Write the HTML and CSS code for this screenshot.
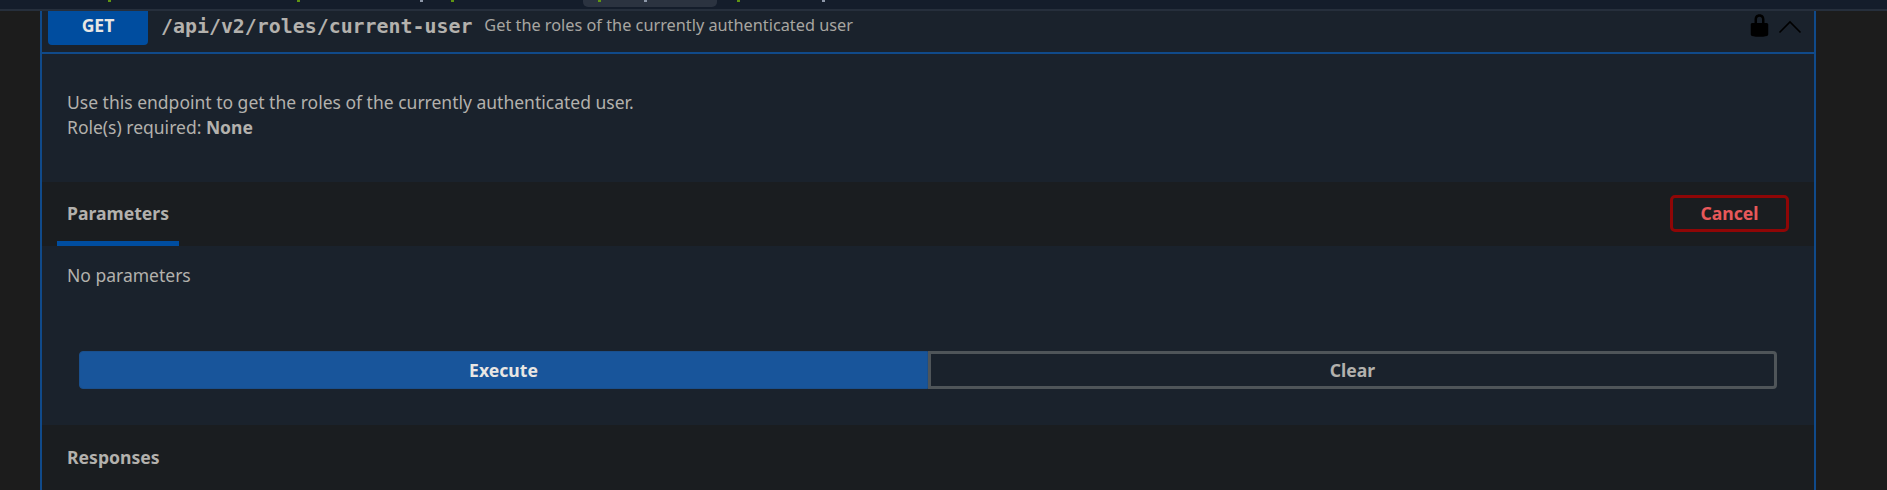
FILE: index.html
```html
<!DOCTYPE html>
<html lang="en">
<head>
    <meta charset="UTF-8">
    <title>Swagger UI</title>
    <link rel="stylesheet" href="styles.css">
</head>
<body>
    <div class="topbar">
        <span class="mark mark-1"></span>
        <span class="mark mark-2"></span>
        <span class="mark mark-3 mark-pale"></span>
        <span class="mark mark-4"></span>
        <span class="code-pill">
            <span class="mark mark-5"></span>
            <span class="mark mark-6 mark-pale"></span>
        </span>
        <span class="mark mark-7"></span>
        <span class="mark mark-8 mark-pale"></span>
    </div>
    <div class="opblock">
        <div class="summary">
            <span class="method">GET</span>
            <span class="path">/api/v2/roles/current-user</span>
            <span class="summary-text">Get the roles of the currently authenticated user</span>
            <svg class="lock" viewBox="0 0 20 20" width="25" height="25">
                <path d="M15.8 8H14V5.6C14 2.703 12.665 1 10 1 7.334 1 6 2.703 6 5.6V8H4c-.553 0-1 .646-1 1.199V17c0 .549.428 1.139.951 1.307l1.197.387C5.672 18.861 6.55 19 7.1 19h5.8c.549 0 1.428-.139 1.951-.307l1.196-.387c.524-.167.953-.757.953-1.306V9.199C17 8.646 16.352 8 15.8 8zM12 8H8V5.199C8 3.754 8.797 3 10 3c1.203 0 2 .754 2 2.199V8z"/>
            </svg>
            <svg class="arrow" viewBox="0 0 24 14" width="24" height="14">
                <polyline points="1.5,12.5 12,2 22.5,12.5"/>
            </svg>
        </div>
        <div class="description">
            <p>Use this endpoint to get the roles of the currently authenticated user.</p>
            <p>Role(s) required: <b>None</b></p>
        </div>
        <div class="section-header">
            <div class="tab">Parameters</div>
            <button class="cancel">Cancel</button>
        </div>
        <div class="no-params">No parameters</div>
        <div class="actions">
            <button class="execute">Execute</button>
            <button class="clear">Clear</button>
        </div>
        <div class="responses-header">Responses</div>
    </div>
</body>
</html>
```

FILE: styles.css
```css
html, body {
    height: 100%;
}
body {
    margin: 0;
    overflow: hidden;
    background: #1c1c1c;
    font-family: "Noto Sans", "Open Sans", sans-serif;
    color: #b3b1ad;
    display: flex;
    flex-direction: column;
}
p {
    margin: 0;
}
button {
    font-family: inherit;
    font-weight: 700;
    font-size: 17.6px;
    cursor: pointer;
}
.topbar {
    flex: none;
    display: flex;
    align-items: flex-start;
    height: 9px;
    background: #141d2b;
    border-bottom: 2px solid #262f3c;
}
.mark {
    width: 3px;
    height: 2px;
    background: #5f9412;
}
.mark-pale {
    background: #8d97a8;
}
.mark-1 {
    margin-left: 108px;
}
.mark-2 {
    margin-left: 186px;
}
.mark-3 {
    margin-left: 120px;
}
.mark-4 {
    margin-left: 28px;
}
.mark-5 {
    margin-left: 15px;
}
.mark-6 {
    margin-left: 43px;
}
.mark-7 {
    margin-left: 20px;
}
.mark-8 {
    margin-left: 82px;
}
.code-pill {
    display: flex;
    align-items: flex-start;
    width: 134px;
    height: 7px;
    margin-left: 129px;
    background: #2b3340;
    border-radius: 0 0 5px 5px;
}
.opblock {
    flex: 1;
    display: flex;
    flex-direction: column;
    margin: 0 71px 0 40px;
    background: #1a222c;
    border-left: 2px solid #104a8a;
    border-right: 2px solid #104a8a;
}
.summary {
    display: flex;
    align-items: flex-start;
    height: 41px;
    border-bottom: 2px solid #104a8a;
    flex: none;
}
.method {
    width: 100px;
    height: 34px;
    margin-left: 6px;
    background: #004d9f;
    border-radius: 0 0 4px 4px;
    color: #e8e6e3;
    font-weight: 700;
    font-size: 17.6px;
    line-height: 28px;
    text-align: center;
}
.path {
    margin-left: 13px;
    font-family: "DejaVu Sans Mono", monospace;
    font-weight: 700;
    font-size: 19.9px;
    line-height: 32px;
    color: #b3b1ad;
}
.summary-text {
    margin-left: 12px;
    font-size: 16.3px;
    line-height: 29px;
    color: #a8a6a1;
}
.lock {
    margin: 2px 0 0 auto;
    fill: #000;
}
.arrow {
    margin: 9px 12px 0 6px;
    fill: none;
    stroke: #000;
    stroke-width: 1.6;
}
.description {
    flex: none;
    height: 128px;
    box-sizing: border-box;
    padding: 36px 25px 0;
    font-size: 17.5px;
    line-height: 25px;
}
.section-header {
    flex: none;
    display: flex;
    align-items: flex-start;
    justify-content: space-between;
    height: 64px;
    padding: 0 25px 0 15px;
    background: #1a1d20;
}
.tab {
    width: 122px;
    box-sizing: border-box;
    height: 64px;
    padding: 19px 0 0 10px;
    border-bottom: 5px solid #004d9f;
    font-size: 17.6px;
    font-weight: 700;
    line-height: 25px;
}
.cancel {
    width: 119px;
    height: 37px;
    margin-top: 13px;
    padding: 0 0 2px;
    background: transparent;
    border: 3px solid #8f0606;
    border-radius: 5px;
    color: #e8585a;
}
.no-params {
    flex: none;
    padding: 17px 25px 0;
    height: 105px;
    box-sizing: border-box;
    font-size: 17.5px;
    line-height: 25px;
}
.actions {
    flex: none;
    display: flex;
    height: 74px;
    padding: 0 37px;
}
.actions button {
    width: 50%;
    height: 38px;
    padding: 0;
}
.execute {
    background: #18559b;
    border: 1px solid #1a4f8c;
    border-radius: 4px 0 0 4px;
    color: #e8e6e3;
}
.clear {
    background: transparent;
    border: 3px solid #4f5559;
    border-radius: 0 4px 4px 0;
    color: #b3b1ad;
}
.responses-header {
    flex: 1;
    padding: 20px 25px 0;
    background: #1a1d20;
    font-size: 17.6px;
    font-weight: 700;
    line-height: 25px;
}
```
